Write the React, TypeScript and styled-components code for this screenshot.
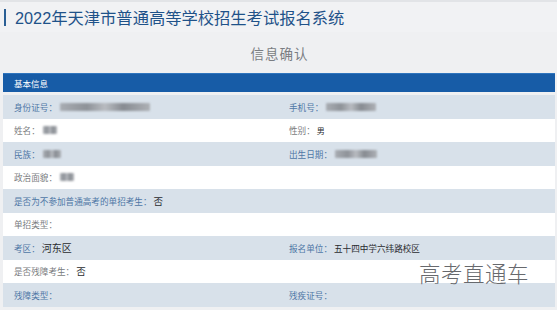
import React from "react";
import styled, { createGlobalStyle } from "styled-components";

const Global = createGlobalStyle`
  html, body { margin: 0; padding: 0; }
  body {
    background: #eff0f2;
    font-family: "Liberation Sans", "Noto Sans CJK SC", sans-serif;
    width: 557px;
    height: 310px;
    overflow: hidden;
  }
`;

const Page = styled.div`
  position: relative;
  width: 557px;
  height: 310px;
  display: flex;
  flex-direction: column;
  border-top: 2px solid #e2e4e7;
  box-sizing: border-box;
`;

const Header = styled.div`
  height: 30px;
  display: flex;
  align-items: center;
  padding-left: 4px;
  gap: 9px;
  background: #f1f2f4;
`;

const Bar = styled.div`
  width: 2px;
  height: 17px;
  background: #2a5f95;
`;

const Title = styled.h1`
  margin: 0;
  font-size: 16.3px;
  font-weight: 400;
  color: #1f5289;
  white-space: nowrap;
`;

const Subtitle = styled.div`
  height: 41px;
  display: flex;
  align-items: center;
  justify-content: center;
  padding-left: 2px;
  font-size: 13.5px;
  color: #7a7d82;
  letter-spacing: 1px;
`;

const Panel = styled.div`
  margin: 0 2px 0 3px;
  display: flex;
  flex-direction: column;
`;

const SectionHead = styled.div`
  height: 19px;
  background: #175ca7;
  border-top: 1px solid #2f75be;
  box-sizing: border-box;
  display: flex;
  align-items: center;
  padding-left: 11px;
  font-size: 8.5px;
  color: #ffffff;
  margin-bottom: 3px;
`;

const Row = styled.div<{ $alt: boolean }>`
  height: 23.5px;
  display: grid;
  grid-template-columns: 276px 1fr;
  background: ${(p) => (p.$alt ? "#d8e1ea" : "#ffffff")};
  color: ${(p) => (p.$alt ? "#4f77a6" : "#7a7c80")};
`;

const Cell = styled.div<{ $right?: boolean }>`
  display: flex;
  align-items: center;
  padding-left: ${(p) => (p.$right ? "10px" : "11px")};
  font-size: 8.6px;
  white-space: nowrap;
`;

const Value = styled.span<{ $size?: number }>`
  color: #2a2c30;
  font-size: ${(p) => p.$size ?? 9.5}px;
  margin-left: 2px;
`;

const Blur = styled.span`
  display: inline-block;
  height: 8px;
  margin-left: 3px;
  background: linear-gradient(90deg, #a9adb3 0%, #8e9298 30%, #b9bcc1 50%, #878b91 70%, #aeb1b6 100%);
  filter: blur(1.2px);
  border-radius: 1px;
`;

const Watermark = styled.div`
  position: absolute;
  left: 419px;
  top: 255px;
  font-size: 21.5px;
  font-weight: 300;
  color: #67696d;
  letter-spacing: 0.5px;
  font-family: "Noto Sans CJK SC", sans-serif;
`;

type Field = { label: string; value?: string; blur?: number; size?: number };
const rows: [Field, Field?][] = [
  [
    { label: "身份证号：", blur: 90 },
    { label: "手机号：", blur: 50 },
  ],
  [{ label: "姓名：", blur: 14 }, { label: "性别：", value: "男", size: 8 }],
  [{ label: "民族：", blur: 18 }, { label: "出生日期：", blur: 42 }],
  [{ label: "政治面貌：", blur: 14 }],
  [{ label: "是否为不参加普通高考的单招考生：", value: "否" }],
  [{ label: "单招类型：" }],
  [
    { label: "考区：", value: "河东区", size: 10 },
    { label: "报名单位：", value: "五十四中学六纬路校区", size: 8.6 },
  ],
  [{ label: "是否残障考生：", value: "否" }],
  [{ label: "残障类型：" }, { label: "残疾证号：" }],
];

function FieldView({ f }: { f: Field }) {
  return (
    <>
      {f.label}
      {f.value && <Value $size={f.size}>{f.value}</Value>}
      {f.blur && <Blur style={{ width: f.blur }} />}
    </>
  );
}

export default function App() {
  return (
    <>
      <Global />
      <Page>
        <Header>
          <Bar />
          <Title>2022年天津市普通高等学校招生考试报名系统</Title>
        </Header>
        <Subtitle>信息确认</Subtitle>
        <Panel>
          <SectionHead>基本信息</SectionHead>
          {rows.map((r, i) => (
            <Row key={i} $alt={i % 2 === 0}>
              <Cell>
                <FieldView f={r[0]} />
              </Cell>
              <Cell $right>{r[1] && <FieldView f={r[1]} />}</Cell>
            </Row>
          ))}
        </Panel>
        <Watermark>高考直通车</Watermark>
      </Page>
    </>
  );
}
